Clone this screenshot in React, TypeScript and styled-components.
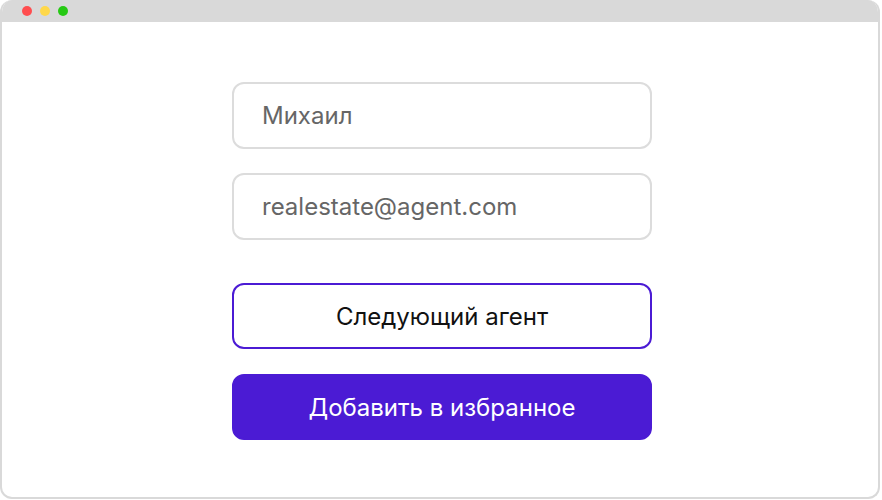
import React from 'react';
import styled, { createGlobalStyle } from 'styled-components';

const GlobalStyle = createGlobalStyle`
  html, body {
    margin: 0;
    padding: 0;
    background: #ffffff;
  }
  * {
    box-sizing: border-box;
  }
`;

const Window = styled.div`
  width: 880px;
  height: 499px;
  border: 2px solid #d9d9d9;
  border-top: none;
  border-radius: 12px;
  overflow: hidden;
  background: #ffffff;
  display: flex;
  flex-direction: column;
  font-family: Inter, 'Noto Sans', sans-serif;
`;

const TitleBar = styled.div`
  height: 22px;
  background: #d9d9d9;
  display: flex;
  align-items: center;
  gap: 8px;
  padding-left: 20px;
`;

const Dot = styled.span<{ $color: string }>`
  width: 10px;
  height: 10px;
  border-radius: 50%;
  background: ${p => p.$color};
`;

const Body = styled.div`
  flex: 1;
  display: flex;
  flex-direction: column;
  align-items: center;
  padding-top: 60px;
  padding-left: 4px;
`;

const Form = styled.div`
  width: 420px;
  display: flex;
  flex-direction: column;
`;

const Field = styled.div<{ $gap?: number }>`
  height: 67px;
  border: 2px solid #dcdcdc;
  border-radius: 12px;
  display: flex;
  align-items: center;
  padding-left: 28px;
  font-size: 24px;
  color: #666666;
  margin-bottom: ${p => p.$gap ?? 24}px;
`;

const Button = styled.button<{ $primary?: boolean }>`
  height: 66px;
  border-radius: 12px;
  border: 2px solid #4b1bd4;
  background: ${p => (p.$primary ? '#4b1bd4' : '#ffffff')};
  color: ${p => (p.$primary ? '#ffffff' : '#111111')};
  font-family: Inter, 'Noto Sans', sans-serif;
  font-size: 24px;
  display: flex;
  align-items: center;
  justify-content: center;
  margin-bottom: 25px;
  cursor: pointer;
`;

const App: React.FC = () => {
  return (
    <>
      <GlobalStyle />
      <Window>
        <TitleBar>
          <Dot $color="#ff4d4f" />
          <Dot $color="#ffd84a" />
          <Dot $color="#26c914" />
        </TitleBar>
        <Body>
          <Form>
            <Field>Михаил</Field>
            <Field $gap={43}>realestate@agent.com</Field>
            <Button>Следующий агент</Button>
            <Button $primary>Добавить в избранное</Button>
          </Form>
        </Body>
      </Window>
    </>
  );
};

export default App;
